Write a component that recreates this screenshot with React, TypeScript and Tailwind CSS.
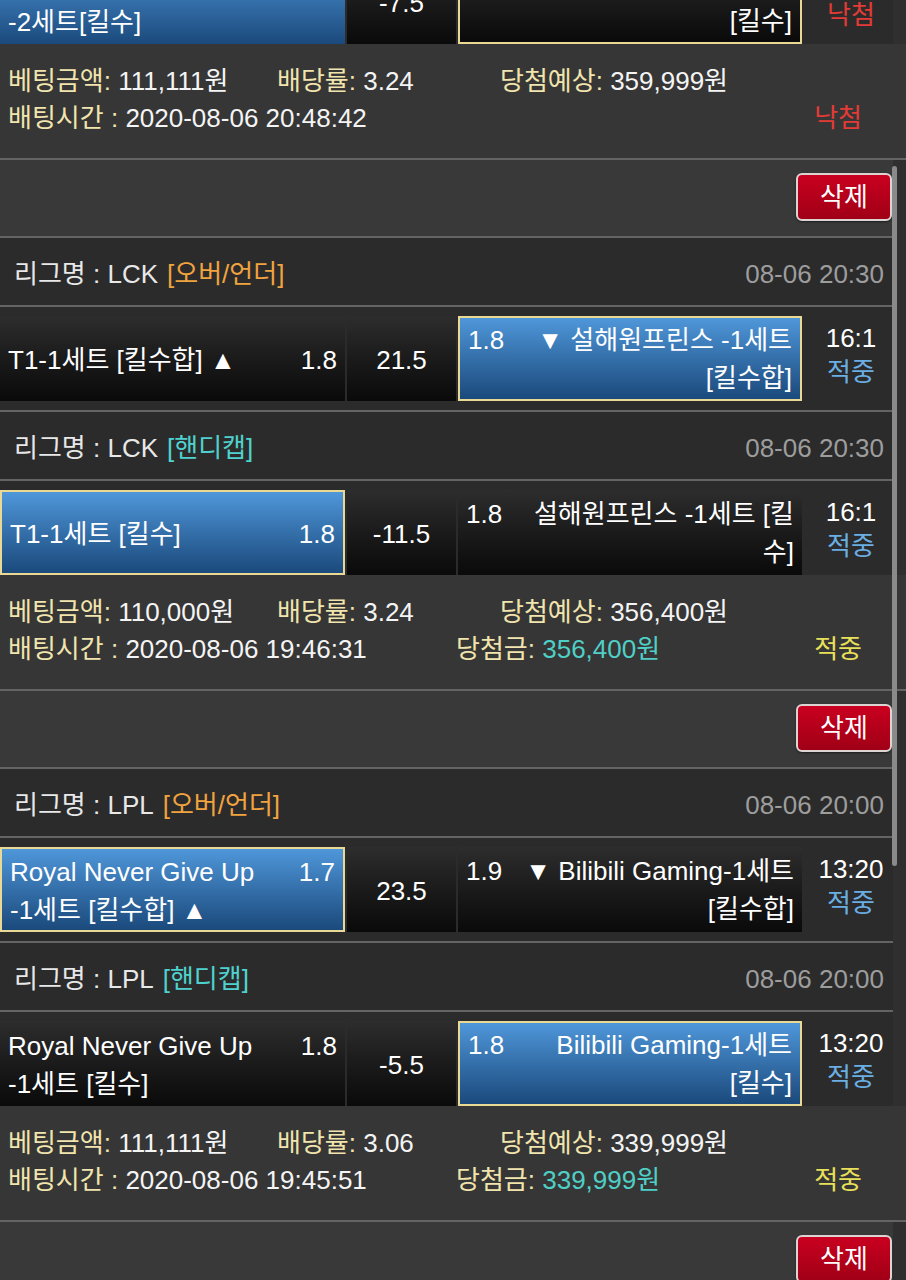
type Side = { odds: string; lines: string[]; blue?: boolean; sel?: boolean };

type Match = {
  left: Side;
  mid: string;
  right: Side;
  score: string;
  result: string;
  resultClass: string;
};

type Info = {
  amount: string;
  rate: string;
  expect: string;
  time: string;
  win?: string;
  result: string;
  resultClass: string;
};

const FONT = "font-['Liberation_Sans','Noto_Sans_CJK_KR',sans-serif]";

function cellClass(s: Side) {
  const bg = s.blue
    ? "bg-linear-to-b from-[#4f97da] to-[#1b4a7c]"
    : "bg-linear-to-b from-[#2d2d2d] to-[#0a0a0a]";
  return s.sel ? `${bg} border-2 border-[#e9d994]` : bg;
}

function Sep({ full }: { full?: boolean }) {
  return <div className={full ? "h-[2px] w-[906px] bg-[#646464]" : "h-[2px] w-[893px] bg-[#646464]"} />;
}

function MatchCells({ m }: { m: Match }) {
  return (
    <div className="flex h-[85px] text-white">
      <div className={`shrink-0 w-[345px] h-full flex flex-col justify-center px-[8px] pt-[2px] leading-[38px] ${cellClass(m.left)}`}>
        <div className="flex justify-between whitespace-nowrap">
          <span>{m.left.lines[0]}</span>
          <span>{m.left.odds}</span>
        </div>
        {m.left.lines[1] && <div className="whitespace-nowrap">{m.left.lines[1]}</div>}
      </div>
      <div className="shrink-0 ml-[2px] w-[109px] h-full flex items-center justify-center pt-[3px] bg-linear-to-b from-[#2d2d2d] to-[#0a0a0a]">
        {m.mid}
      </div>
      <div className={`shrink-0 ml-[2px] w-[344px] h-full flex flex-col justify-center px-[8px] pt-[1px] leading-[38px] ${cellClass(m.right)}`}>
        <div className="flex justify-between whitespace-nowrap">
          <span>{m.right.odds}</span>
          <span>{m.right.lines[0]}</span>
        </div>
        {m.right.lines[1] && <div className="text-right whitespace-nowrap">{m.right.lines[1]}</div>}
      </div>
      <div className="shrink-0 ml-[3px] w-[88px] flex flex-col items-center pl-[4px] pt-[5px] leading-[34px]">
        <span>{m.score}</span>
        <span className={m.resultClass}>{m.result}</span>
      </div>
    </div>
  );
}

function MatchRow({ m, last }: { m: Match; last?: boolean }) {
  return (
    <div className={last ? "w-[893px] h-[94px] pt-[9px] bg-[#2b2b2b]" : "w-[893px] h-[103px] pt-[9px] bg-[#2b2b2b]"}>
      <MatchCells m={m} />
    </div>
  );
}

function LeagueRow({ league, tag, tagClass, time }: { league: string; tag: string; tagClass: string; time: string }) {
  return (
    <div className="w-[893px] h-[67px] flex items-center justify-between pl-[14px] pr-[9px] pt-[5px] bg-[#2b2b2b]">
      <div className="whitespace-nowrap">
        <span className="text-[#e8e8e8]">리그명 : {league}</span>
        <span className={`ml-[9px] ${tagClass}`}>{tag}</span>
      </div>
      <span className="text-[#9d9d9d]">{time}</span>
    </div>
  );
}

function L({ children }: { children: React.ReactNode }) {
  return <span className="text-[#f1e5ad]">{children}</span>;
}

function InfoBlock({ d }: { d: Info }) {
  return (
    <div className="w-[906px] h-[114px] bg-[#363636] pt-[19px] pl-[8px] leading-[37px] text-[#f4f4f4] whitespace-nowrap">
      <div className="flex">
        <span className="w-[269px]">
          <L>베팅금액:</L> {d.amount}
        </span>
        <span className="w-[223px]">
          <L>배당률:</L> {d.rate}
        </span>
        <span>
          <L>당첨예상:</L> {d.expect}
        </span>
      </div>
      <div className="flex">
        <span className="w-[448px]">
          <L>배팅시간 :</L> {d.time}
        </span>
        {d.win && (
          <span>
            <L>당첨금:</L> <span className="text-[#4fcfc6]">{d.win}</span>
          </span>
        )}
        <span className={`ml-auto mr-[44px] ${d.resultClass}`}>{d.result}</span>
      </div>
    </div>
  );
}

function DeleteRow() {
  return (
    <div className="w-[893px] h-[76px] flex items-center justify-end pr-[1px] bg-[#393939]">
      <button className="w-[96px] h-[48px] -mt-[2px] rounded-[6px] border-2 border-[#ddd3d3] bg-linear-to-b from-[#c9001f] to-[#a00016] text-white text-[26px] leading-none shadow-[0_1px_2px_rgba(0,0,0,0.5)]">
        삭제
      </button>
    </div>
  );
}

const BLUE_RESULT = "text-[#6aaee4]";
const RED_RESULT = "text-[#e23b36]";
const YELLOW_RESULT = "text-[#e9e05a]";

const topMatch: Match = {
  left: { odds: "1.8", lines: ["Hanwha Life Esports", "-2세트[킬수]"], blue: true },
  mid: "-7.5",
  right: { odds: "1.9", lines: ["DRX-2세트", "[킬수]"], sel: true },
  score: "7:16",
  result: "낙첨",
  resultClass: RED_RESULT,
};

const lck1: Match = {
  left: { odds: "1.8", lines: ["T1-1세트 [킬수합] ▲"] },
  mid: "21.5",
  right: { odds: "1.8", lines: ["▼ 설해원프린스 -1세트", "[킬수합]"], blue: true, sel: true },
  score: "16:1",
  result: "적중",
  resultClass: BLUE_RESULT,
};

const lck2: Match = {
  left: { odds: "1.8", lines: ["T1-1세트 [킬수]"], blue: true, sel: true },
  mid: "-11.5",
  right: { odds: "1.8", lines: ["설해원프린스 -1세트 [킬", "수]"] },
  score: "16:1",
  result: "적중",
  resultClass: BLUE_RESULT,
};

const lpl1: Match = {
  left: { odds: "1.7", lines: ["Royal Never Give Up", "-1세트 [킬수합] ▲"], blue: true, sel: true },
  mid: "23.5",
  right: { odds: "1.9", lines: ["▼ Bilibili Gaming-1세트", "[킬수합]"] },
  score: "13:20",
  result: "적중",
  resultClass: BLUE_RESULT,
};

const lpl2: Match = {
  left: { odds: "1.8", lines: ["Royal Never Give Up", "-1세트 [킬수]"] },
  mid: "-5.5",
  right: { odds: "1.8", lines: ["Bilibili Gaming-1세트", "[킬수]"], blue: true, sel: true },
  score: "13:20",
  result: "적중",
  resultClass: BLUE_RESULT,
};

export default function App() {
  return (
    <div className={`relative w-[906px] h-[1280px] overflow-hidden bg-[#2f2f2f] text-[26px] ${FONT}`}>
      <div className="w-[893px] h-[44px] overflow-hidden bg-[#2b2b2b]">
        <div className="-mt-[41px]">
          <MatchCells m={topMatch} />
        </div>
      </div>
      <InfoBlock
        d={{ amount: "111,111원", rate: "3.24", expect: "359,999원", time: "2020-08-06 20:48:42", result: "낙첨", resultClass: RED_RESULT }}
      />
      <Sep full />
      <DeleteRow />
      <Sep />
      <LeagueRow league="LCK" tag="[오버/언더]" tagClass="text-[#f0a33e]" time="08-06 20:30" />
      <Sep />
      <MatchRow m={lck1} />
      <Sep />
      <LeagueRow league="LCK" tag="[핸디캡]" tagClass="text-[#4fd2cf]" time="08-06 20:30" />
      <Sep />
      <MatchRow m={lck2} last />
      <InfoBlock
        d={{
          amount: "110,000원",
          rate: "3.24",
          expect: "356,400원",
          time: "2020-08-06 19:46:31",
          win: "356,400원",
          result: "적중",
          resultClass: YELLOW_RESULT,
        }}
      />
      <Sep full />
      <DeleteRow />
      <Sep />
      <LeagueRow league="LPL" tag="[오버/언더]" tagClass="text-[#f0a33e]" time="08-06 20:00" />
      <Sep />
      <MatchRow m={lpl1} />
      <Sep />
      <LeagueRow league="LPL" tag="[핸디캡]" tagClass="text-[#4fd2cf]" time="08-06 20:00" />
      <Sep />
      <MatchRow m={lpl2} last />
      <InfoBlock
        d={{
          amount: "111,111원",
          rate: "3.06",
          expect: "339,999원",
          time: "2020-08-06 19:45:51",
          win: "339,999원",
          result: "적중",
          resultClass: YELLOW_RESULT,
        }}
      />
      <Sep full />
      <DeleteRow />

      {/* scrollbar thumb */}
      <div className="absolute left-[892px] top-[166px] w-[5px] h-[700px] rounded-full bg-[#8a8a8a]" />
    </div>
  );
}
